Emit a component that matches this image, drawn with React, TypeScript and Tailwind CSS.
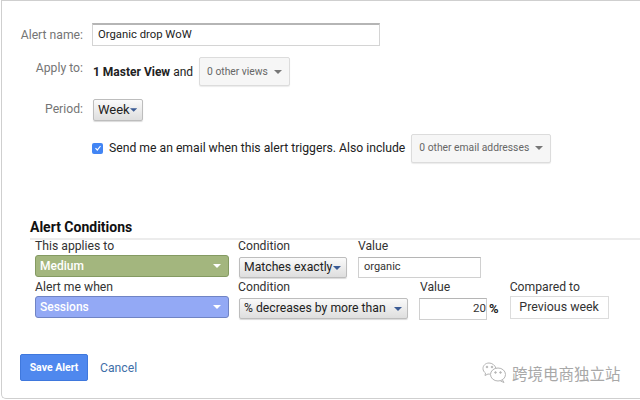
const font = "font-['Roboto','Liberation_Sans',sans-serif]"

function Caret({ className }: { className: string }) {
  return (
    <svg width="8" height="4" viewBox="0 0 8 4" className={className}>
      <path d="M0 0h8L4 4z" fill="currentColor" />
    </svg>
  )
}

function FormLabel({ text, className }: { text: string; className: string }) {
  return <div className={`w-[83px] shrink-0 text-right text-[12.2px] leading-4 text-[#757575] ${className}`}>{text}</div>
}

function GreyMenu({ text, className }: { text: string; className: string }) {
  return (
    <div className={`flex h-[29px] items-center justify-between rounded-[2px] border border-[#dcdcdc] bg-[#f6f6f6] pl-[7px] pr-[7px] text-[10.3px] text-[#666] shadow-[0_1px_1px_rgba(0,0,0,0.08)] ${className}`}>
      <span className="whitespace-nowrap">{text}</span>
      <Caret className="text-[#777]" />
    </div>
  )
}

function NativeSelect({ text, className }: { text: string; className: string }) {
  return (
    <div className={`flex h-[21px] items-center justify-between rounded-[2px] border border-[#bdbdbd] bg-gradient-to-b from-[#fafafa] to-[#dedede] pl-[4px] pr-[5px] text-[12.2px] text-[#222] shadow-[0_1px_1px_rgba(0,0,0,0.15)] ${className}`}>
      <span className="whitespace-nowrap">{text}</span>
      <Caret className="text-[#3b5b94]" />
    </div>
  )
}

function ColorSelect({ text, className }: { text: string; className: string }) {
  return (
    <div className={`flex h-[22px] w-[194px] items-center justify-between rounded-[3px] border pl-[4px] pr-[7px] text-[12px] font-medium text-white ${className}`}>
      <span>{text}</span>
      <Caret className="text-white" />
    </div>
  )
}

function ColLabel({ text, className = "" }: { text: string; className?: string }) {
  return <div className={`text-[12.2px] leading-[15px] text-[#333] ${className}`}>{text}</div>
}

function WeChatMark() {
  return (
    <svg width="25" height="21" viewBox="0 0 25 21" fill="none" stroke="#b5b5b5" strokeWidth="1" className="shrink-0">
      <path d="M14 6.5C13 3 10 1 7 1 3.5 1 1 3.5 1 6.5c0 2 1 3.5 2.5 4.5L3 13.5l3-1.5c.8.2 1.5.2 2.2.1" />
      <ellipse cx="16" cy="12.5" rx="7.5" ry="6.5" />
      <path d="M20.5 18l1.5 2.5-3.5-1.5" />
      <circle cx="5" cy="5" r=".8" fill="#b5b5b5" />
      <circle cx="10" cy="5" r=".8" fill="#b5b5b5" />
      <circle cx="13.5" cy="10.5" r=".8" fill="#b5b5b5" />
      <circle cx="18.5" cy="10.5" r=".8" fill="#b5b5b5" />
    </svg>
  )
}

export default function App() {
  return (
    <div className={`${font} h-[400px] w-[640px] overflow-hidden bg-white`}>
      <div className="ml-px h-[399px] overflow-hidden rounded-bl-[5px] border-b border-l border-t border-[#cfcfcf] pt-[22px]">
        {/* alert name */}
        <div className="flex items-start">
          <FormLabel text="Alert name:" className="mt-[4px] -ml-[2px]" />
          <div className="ml-[9px] flex h-[23px] w-[288px] items-center border border-t-2 border-[#d4d4d4] border-t-[#b5b5b5] pl-[5px] text-[11.3px] text-[#222]">
            Organic drop WoW
          </div>
        </div>

        {/* apply to */}
        <div className="mt-[11px] flex items-start">
          <FormLabel text="Apply to:" className="mt-[3px] -ml-[2px]" />
          <div className="ml-[10px] mt-[7px] text-[12px] leading-4 text-[#222]">
            <span className="font-bold">1 Master View</span> and
          </div>
          <GreyMenu text="0 other views" className="ml-[6px] w-[91px]" />
        </div>

        {/* period */}
        <div className="mt-[13px] flex items-start">
          <FormLabel text="Period:" className="mt-[2px] -ml-[2px]" />
          <NativeSelect text="Week" className="ml-[10px] h-[22px] w-[50px] text-[13px]" />
        </div>

        {/* email row */}
        <div className="ml-[90px] mt-[13px] flex h-[28px] items-center">
          <div className="flex h-[11px] w-[11px] items-center justify-center rounded-[2px] bg-[#4285f4]">
            <svg width="8" height="8" viewBox="0 0 8 8" fill="none" stroke="white" strokeWidth="1.2">
              <path d="M1.5 4.2l1.8 1.8 3.2-4" />
            </svg>
          </div>
          <span className="ml-[6px] whitespace-nowrap text-[12.2px] text-[#222]">
            Send me an email when this alert triggers. Also include
          </span>
          <GreyMenu text="0 other email addresses" className="ml-[6px] w-[140px]" />
        </div>

        {/* conditions */}
        <div className="ml-[28px] mt-[57px] border-b-2 border-[#ececec] pb-[2px] text-[14px] font-bold leading-[17px] text-[#111]">
          Alert Conditions
        </div>

        <div className="ml-[33px] -mt-px flex items-start">
          <div className="w-[194px]">
            <ColLabel text="This applies to" />
            <ColorSelect text="Medium" className="mt-px border-[#849a62] bg-[#a3b67e]" />
          </div>
          <div className="ml-[10px] w-[108px]">
            <ColLabel text="Condition" className="-ml-px" />
            <NativeSelect text="Matches exactly" className="mt-[3px] w-[108px]" />
          </div>
          <div className="ml-[11px]">
            <ColLabel text="Value" />
            <div className="mt-[3px] flex h-[21px] w-[123px] items-center border border-[#d0d0d0] border-t-[#b5b5b5] pl-[5px] text-[11px] text-[#333]">
              organic
            </div>
          </div>
        </div>

        <div className="ml-[33px] mt-[2px] flex items-start">
          <div className="w-[194px]">
            <ColLabel text="Alert me when" />
            <ColorSelect text="Sessions" className="mt-px border-[#7084c4] bg-[#93a9f5]" />
          </div>
          <div className="ml-[10px]">
            <ColLabel text="Condition" className="-ml-px" />
            <NativeSelect text="% decreases by more than" className="mt-[3px] w-[169px]" />
          </div>
          <div className="ml-[11px]">
            <ColLabel text="Value" className="ml-px" />
            <div className="mt-[3px] flex items-center">
              <div className="flex h-[22px] w-[68px] items-center justify-end border border-[#d0d0d0] border-t-[#b5b5b5] text-[11.5px] text-[#333]">
                20
              </div>
              <span className="ml-[2px] text-[13px] font-bold text-[#222]">%</span>
            </div>
          </div>
          <div className="ml-[11px]">
            <ColLabel text="Compared to" />
            <div className="mt-px flex h-[23px] w-[99px] items-center justify-center border border-[#dcdcdc] text-[12.4px] text-[#333]">
              Previous week
            </div>
          </div>
        </div>

        {/* footer */}
        <div className="ml-[18px] mt-[34px] flex items-start">
          <div className="flex h-[27px] w-[68px] items-center justify-center rounded-[2px] border border-[#3f78dd] bg-[#4f88ee] text-[10.5px] font-bold text-white">
            Save Alert
          </div>
          <span className="ml-[12px] mt-[5px] text-[12.2px] text-[#3f6fa8]">Cancel</span>
          <div className="ml-[345px] mt-[8px] flex items-center">
            <WeChatMark />
            <span className="ml-[5px] whitespace-nowrap font-['Noto_Sans_CJK_SC',sans-serif] text-[15.5px] leading-5 text-[#a8a8a8]">
              跨境电商独立站
            </span>
          </div>
        </div>
      </div>
    </div>
  )
}
